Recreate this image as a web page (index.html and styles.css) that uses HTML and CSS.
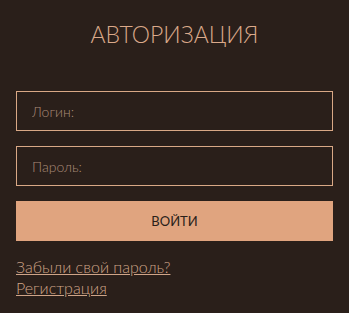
FILE: index.html
```html
<html>
<head>
  <title>Авторизация</title>
  <link rel="stylesheet" href="styles.css">
</head>
<body>
  <div class="login-box">
    <div class="login-title">Авторизация</div>
    <form class="login-form">
      <input class="login-input" type="text" placeholder="Логин:">
      <input class="login-input" type="password" placeholder="Пароль:">
      <button class="login-button" type="button">Войти</button>
    </form>
    <div class="login-links">
      <a href="#" class="login-link">Забыли свой пароль?</a>
      <a href="#" class="login-link">Регистрация</a>
    </div>
  </div>
</body>
</html>
```

FILE: styles.css
```css
body {
  margin: 0;
  background-color: #2a1f1a;
  font-family: 'Lato', 'Open Sans', sans-serif;
}

.login-box {
  padding: 19px 16px 0;
}

.login-title {
  color: #dba98a;
  font-size: 23px;
  font-weight: 300;
  line-height: 30px;
  text-align: center;
  text-transform: uppercase;
}

.login-form {
  display: flex;
  flex-direction: column;
  gap: 15px;
  margin: 42px 0 0;
}

.login-input {
  box-sizing: border-box;
  height: 40px;
  width: 100%;
  padding: 0 15px;
  background: transparent;
  border: 1px solid #d9a886;
  color: #dba98a;
  font-family: 'Lato', 'Open Sans', sans-serif;
  font-size: 14px;
  font-weight: 300;
  outline: none;
}

.login-input::placeholder {
  color: #ab8c79;
}

.login-button {
  height: 40px;
  width: 100%;
  border: none;
  background-color: #e0a47f;
  color: #2a1f1a;
  font-family: 'Lato', 'Open Sans', sans-serif;
  font-size: 13px;
  text-transform: uppercase;
  cursor: pointer;
}

.login-links {
  display: flex;
  flex-direction: column;
  align-items: flex-start;
  margin-top: 15px;
}

.login-link {
  color: #cfa488;
  font-size: 16px;
  font-weight: 300;
  line-height: 21px;
}
```
